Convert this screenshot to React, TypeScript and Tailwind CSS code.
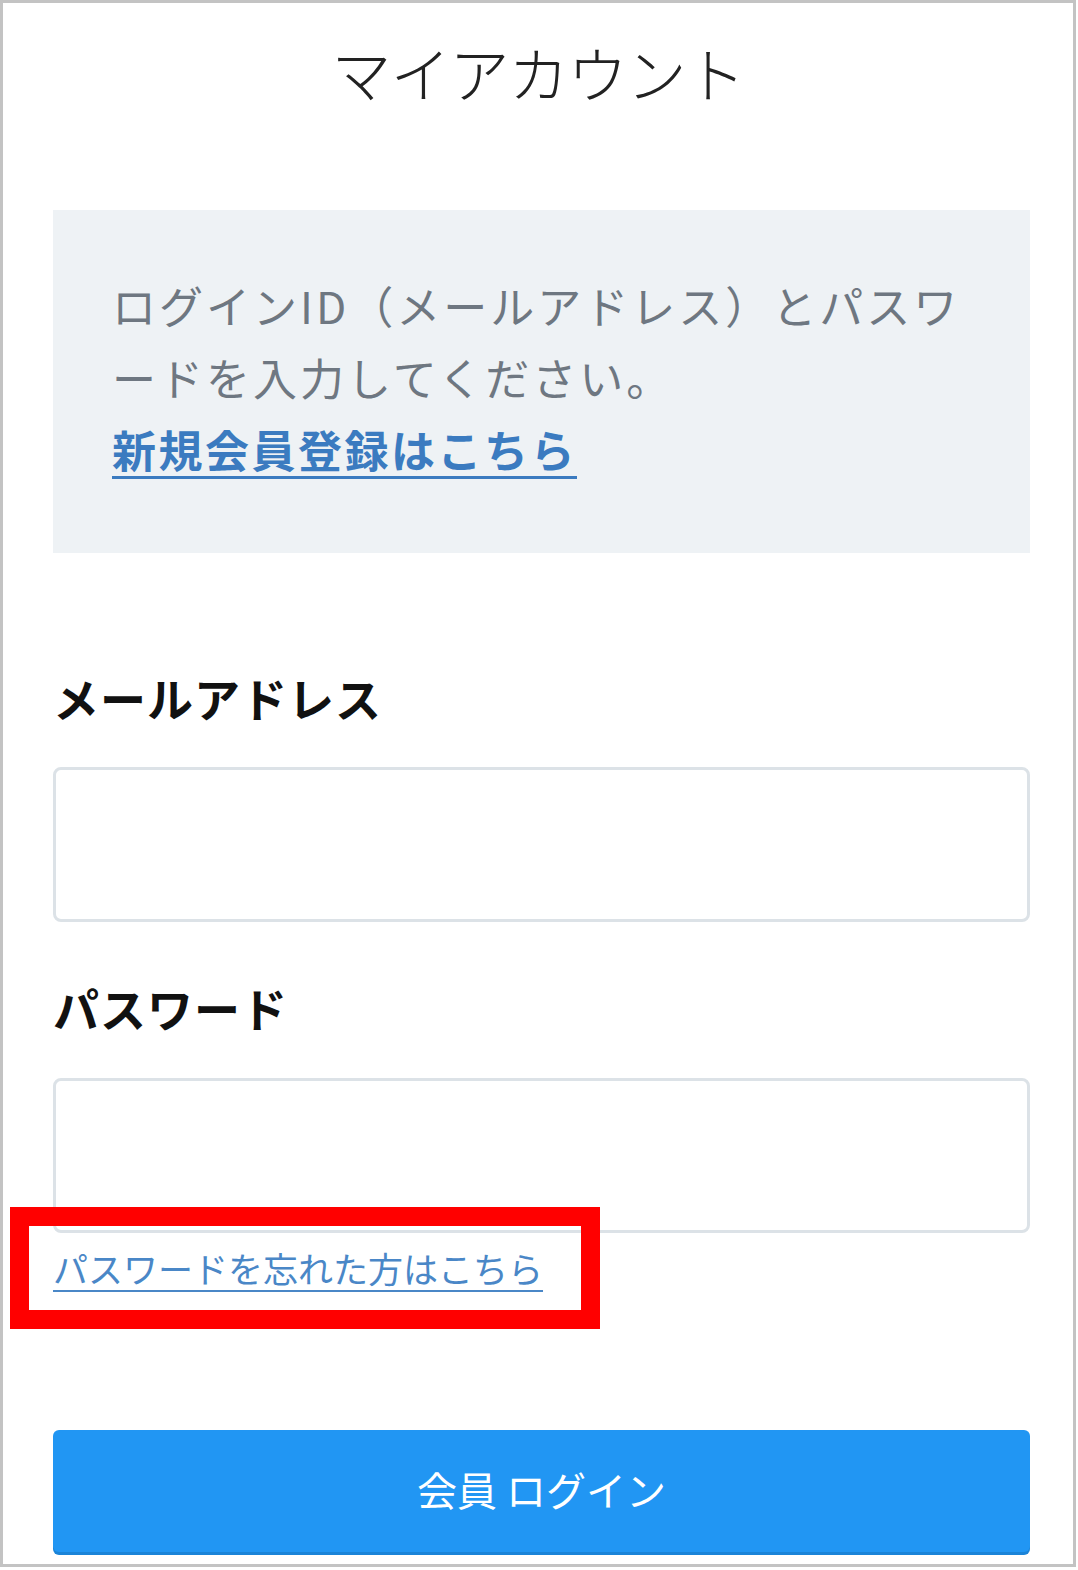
export default function App() {
  return (
    <div
      className="relative w-[1076px] h-[1567px] border-[3px] border-[#c3c3c3] bg-white"
      style={{ fontFamily: '"Noto Sans CJK JP", "Noto Sans", sans-serif' }}
    >
      {/* TITLE */}
      <h1 className="pt-[33px] text-center text-[60px] leading-[72px] font-light tracking-[-1px] text-[#222]">マイアカウント</h1>

      {/* INFO BOX */}
      <div className="mt-[102px] ml-[50px] w-[977px] bg-[#eef2f5] pl-[59px] pt-[59px] pb-[68px] text-[44px] leading-[72px] text-[#6e7781]">
        <p className="whitespace-nowrap tracking-[3px]">
          ログインID（メールアドレス）とパスワ
          <br />
          ードを入力してください。
        </p>
        <a href="#" className="font-bold tracking-[2.5px] text-[#3b7bc0] underline underline-offset-[8px] decoration-[3px]">
          新規会員登録はこちら
        </a>
      </div>

      {/* FORM */}
      <div className="ml-[50px] w-[977px]">
        <label className="block mt-[114px] text-[46px] leading-[60px] font-bold tracking-[1px] text-[#111]">メールアドレス</label>
        <input
          type="email"
          className="block mt-[40px] w-full h-[155px] rounded-[8px] border-[3px] border-[#dce2e7] bg-white"
        />

        <label className="block mt-[55px] text-[46px] leading-[60px] font-bold tracking-[1px] text-[#111]">パスワード</label>
        <input
          type="password"
          className="block mt-[41px] w-full h-[155px] rounded-[8px] border-[3px] border-[#dce2e7] bg-white"
        />

        <a
          href="#"
          className="block mt-[15px] text-[35px] leading-[40px] text-[#4a87c7] underline underline-offset-[7px] decoration-[2px]"
        >
          パスワードを忘れた方はこちら
        </a>

        <button className="mt-[142px] w-full h-[122px] rounded-[6px] bg-[#2196f3] shadow-[0_3px_0_#1b84d8] pb-[4px] text-[40px] text-white">
          会員 ログイン
        </button>
      </div>

      {/* ANNOTATION */}
      <div className="absolute left-[7px] top-[1204px] w-[590px] h-[122px] border-[19px] border-[#ff0000]" />
    </div>
  );
}
